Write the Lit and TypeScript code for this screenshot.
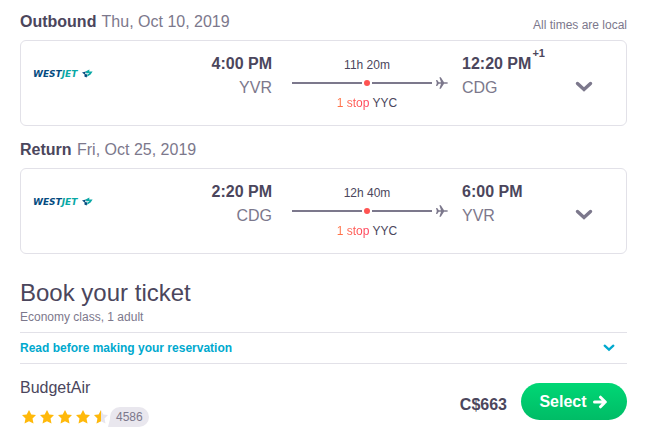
import { LitElement, html, css, svg } from "lit";
import { customElement, property } from "lit/decorators.js";

interface Stop {
  time: string;
  airport: string;
  dayOffset?: string;
}

const chevron = () => html`
  <svg class="chevron" viewBox="0 0 18 12" aria-hidden="true">
    <path d="M2.5 2.5 L9 8.5 L15.5 2.5" fill="none" stroke="currentColor" stroke-width="3.4" stroke-linecap="round"></path>
  </svg>`;

@customElement("flight-leg")
export class FlightLeg extends LitElement {
  @property() heading = "";
  @property() date = "";
  @property() note = "";
  @property() duration = "";
  @property({ attribute: false }) from: Stop = { time: "", airport: "" };
  @property({ attribute: false }) to: Stop = { time: "", airport: "" };

  static styles = css`
    :host { display: block; }
    header {
      display: flex;
      justify-content: space-between;
      line-height: 24px;
      margin-bottom: 6px;
    }
    h2 { margin: 0; font-size: 16px; font-weight: 400; color: #7c788c; }
    h2 b { color: #4b465c; margin-right: 1px; }
    .note { font-size: 12px; line-height: 30px; height: 24px; color: #7c788c; }
    .card {
      display: grid;
      grid-template-columns: minmax(60px, 1fr) 88px 150px 126px 32px;
      padding: 11px 26px 7px 12px;
      border: 1px solid #e2e1e8;
      border-radius: 6px;
    }
    .logo { width: 60px; height: 12px; margin-top: 16px; }
    .logo text { font: italic bold 9px "DejaVu Sans", sans-serif; }
    .point { font-size: 16px; line-height: 24px; color: #7c788c; }
    .point b { color: #4b465c; display: block; white-space: nowrap; }
    .depart { text-align: right; padding-right: 20px; }
    .arrive { padding-left: 20px; }
    .day { font-size: 11px; line-height: 0; vertical-align: 12px; margin-left: 1px; }
    .route { text-align: center; font-size: 12px; color: #4b465c; }
    .duration { line-height: 26px; }
    .track { display: grid; grid-template: 10px / 1fr 10px 1fr; align-items: center; }
    .line { flex: 1; height: 2px; background: #7c788c; }
    .dot { width: 6px; height: 6px; border-radius: 50%; background: #ff5452; justify-self: center; }
    .tail { display: flex; align-items: center; gap: 4px; margin-right: -6px; }
    .plane { width: 12px; height: 12px; }
    .stops { line-height: 30px; }
    .stops span {
      color: transparent;
      background: linear-gradient(90deg, #ff7846, #ff3c5c);
      background-clip: text;
      -webkit-background-clip: text;
    }
    button {
      align-self: center;
      height: 24px;
      margin-top: 4px;
      padding: 0;
      border: 0;
      background: none;
      color: #7c788c;
      cursor: pointer;
    }
    .chevron { display: block; width: 18px; height: 12px; margin: 0 auto; }
  `;

  render() {
    return html`
      <header>
        <h2><b>${this.heading}</b> ${this.date}</h2>
        <span class="note">${this.note}</span>
      </header>
      <div class="card">
        <svg class="logo" viewBox="0 0 60 12" role="img" aria-label="WestJet">
          <text x="0" y="9" fill="#044b7f">WEST<tspan fill="#08a8a5">JET</tspan></text>
          <path d="M49 4.5 L53 3.6 L52 6 L54.5 6.6 L53.6 9.6 L51.4 8.4 L51.6 6.6Z" fill="#044b7f"></path>
          <path d="M52.6 3.6 L56.4 1.6 L56.2 3.6 L59.6 3.4 L57.6 6.6 L54 8.8 L54.6 6.4 L56.8 4.8 L53.6 5.4Z" fill="#08a8a5"></path>
        </svg>
        <div class="point depart"><b>${this.from.time}</b>${this.from.airport}</div>
        <div class="route">
          <div class="duration">${this.duration}</div>
          <div class="track">
            <span class="line"></span>
            <span class="dot"></span>
            <span class="tail">
              <span class="line"></span>
              <svg class="plane" viewBox="0 0 12 12" aria-hidden="true">
                <path d="M0 3 H1.2 L2.8 5.2 H5 L3.4 0.3 H4.8 L8 5.2 H10.5 Q12 5.4 12 6 Q12 6.6 10.5 6.8 H8 L4.8 11.7 H3.4 L5 6.8 H2.8 L1.2 9 H0 L0.8 6Z" fill="#7c788c"></path>
              </svg>
            </span>
          </div>
          <div class="stops"><span>1 stop</span> YYC</div>
        </div>
        <div class="point arrive">
          <b>${this.to.time}${this.to.dayOffset ? html`<span class="day">${this.to.dayOffset}</span>` : ""}</b>${this.to.airport}
        </div>
        <button aria-label="Show flight details">${chevron()}</button>
      </div>
    `;
  }
}

@customElement("star-rating")
export class StarRating extends LitElement {
  @property({ type: Number }) value = 0;

  static styles = css`
    :host { display: flex; gap: 2px; }
    svg { width: 16px; height: 16px; }
  `;

  render() {
    const star = "M8 1 L10.3 5.5 L15 6.1 L11.5 9.5 L12.5 14.6 L8 12.2 L3.5 14.6 L4.5 9.5 L1 6.1 L5.7 5.5Z";
    const left = "M8 1 L8 12.2 L3.5 14.6 L4.5 9.5 L1 6.1 L5.7 5.5Z";
    return [1, 2, 3, 4, 5].map((n) => {
      const full = this.value >= n;
      return html`<svg viewBox="0 0 16 16" aria-hidden="true">
        <path d=${star} fill=${full ? "#ffb90a" : "#e7e5ec"}></path>
        ${full ? "" : svg`<path d=${left} fill="#ffb90a"></path>`}
      </svg>`;
    });
  }
}

@customElement("app-root")
export class AppRoot extends LitElement {
  static styles = css`
    :host {
      display: block;
      padding: 10px 30px 0 20px;
      background: #fff;
      color: #4b465c;
      font-family: "Liberation Sans", Arial, sans-serif;
    }
    flight-leg + flight-leg { margin-top: 12px; }
    h1 { margin: 23px 0 0; font-size: 24px; line-height: 32px; font-weight: 400; }
    .cabin { margin: 0 0 7px; font-size: 12px; line-height: 16px; color: #7c788c; }
    .notice {
      display: flex;
      align-items: center;
      justify-content: space-between;
      box-sizing: border-box;
      width: 100%;
      height: 32px;
      padding: 0 12px 0 0;
      border: solid #e2e1e8;
      border-width: 1px 0;
      background: none;
      color: #00a9ce;
      font: bold 12px "Liberation Sans", Arial, sans-serif;
      cursor: pointer;
    }
    .notice .chevron { width: 12px; height: 8px; }
    .offer { display: flex; align-items: center; padding-top: 12px; }
    .provider { flex: 1; }
    .name { font-size: 16px; line-height: 24px; }
    .rating { display: flex; align-items: center; gap: 1px; margin-top: 7px; padding-left: 1px; }
    .count {
      position: relative;
      padding: 0 6px;
      border-radius: 10px 10px 10px 0;
      background: #e9e7ee;
      color: #7c788c;
      font-size: 12px;
      line-height: 20px;
    }
    .count::before {
      content: "";
      position: absolute;
      left: -2px;
      bottom: 0;
      border: solid transparent;
      border-width: 0 0 8px 2px;
      border-bottom-color: #e9e7ee;
    }
    .price { margin-right: 14px; padding-top: 6px; font-size: 16px; }
    .select {
      display: flex;
      align-items: center;
      justify-content: center;
      gap: 6px;
      width: 106px;
      height: 37px;
      padding: 0 2px 0 0;
      border: 0;
      border-radius: 19px;
      background: linear-gradient(#00d775, #00bc66);
      color: #fff;
      font: bold 16px "Liberation Sans", Arial, sans-serif;
      cursor: pointer;
    }
    .arrow { width: 14px; height: 14px; }
  `;

  render() {
    return html`
      <flight-leg
        heading="Outbound"
        date="Thu, Oct 10, 2019"
        note="All times are local"
        duration="11h 20m"
        .from=${{ time: "4:00 PM", airport: "YVR" }}
        .to=${{ time: "12:20 PM", airport: "CDG", dayOffset: "+1" }}
      ></flight-leg>
      <flight-leg
        heading="Return"
        date="Fri, Oct 25, 2019"
        duration="12h 40m"
        .from=${{ time: "2:20 PM", airport: "CDG" }}
        .to=${{ time: "6:00 PM", airport: "YVR" }}
      ></flight-leg>
      <h1>Book your ticket</h1>
      <p class="cabin">Economy class, 1 adult</p>
      <button class="notice">Read before making your reservation ${chevron()}</button>
      <div class="offer">
        <div class="provider">
          <div class="name">BudgetAir</div>
          <div class="rating">
            <star-rating value="4.5"></star-rating>
            <span class="count">4586</span>
          </div>
        </div>
        <b class="price">C$663</b>
        <button class="select">
          Select
          <svg class="arrow" viewBox="0 0 14 14" aria-hidden="true">
            <path d="M1.5 7 H12 M7.5 2.2 L12.3 7 L7.5 11.8" fill="none" stroke="#fff" stroke-width="3" stroke-linecap="round" stroke-linejoin="round"></path>
          </svg>
        </button>
      </div>
    `;
  }
}
